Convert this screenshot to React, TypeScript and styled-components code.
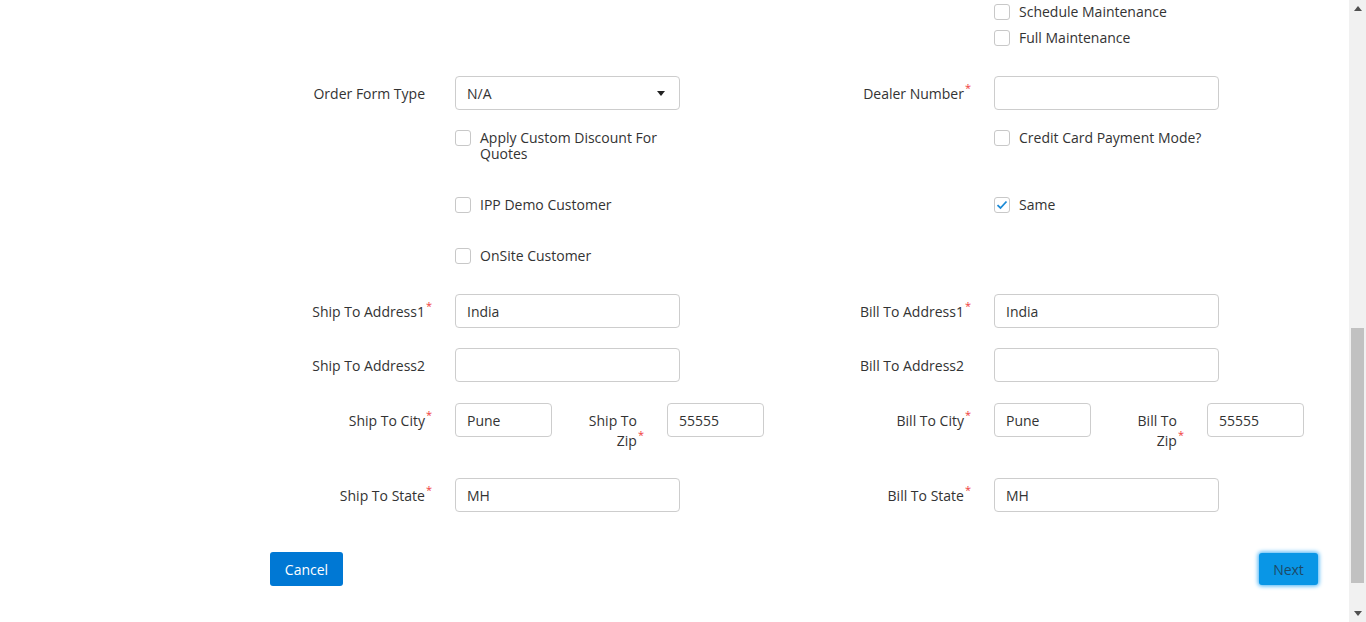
import React from "react";
import styled, { createGlobalStyle } from "styled-components";

const Global = createGlobalStyle`
  html, body { margin: 0; padding: 0; background: #fff; overflow: hidden; }
  body { font-family: "Open Sans", "Liberation Sans", sans-serif; font-size: 14px; color: #333; }
  * { box-sizing: border-box; }
`;

const Page = styled.div`
  display: flex;
  width: 1366px;
  height: 622px;
`;

const Main = styled.main`
  flex: 1;
  padding-left: 270px;
`;

const Row = styled.div<{ $mt: number }>`
  display: grid;
  grid-template-columns: 539px 539px;
  align-items: start;
  margin-top: ${(p) => p.$mt}px;
`;

const Half = styled.div`
  display: flex;
  align-items: flex-start;
`;

const Label = styled.label<{ $w?: number; $ml?: number }>`
  flex: none;
  width: ${(p) => p.$w ?? 155}px;
  margin-left: ${(p) => p.$ml ?? 0}px;
  margin-right: 30px;
  padding-top: 8px;
  line-height: 20px;
  text-align: right;
  color: #333;
`;

const Req = styled.span`
  color: #ef3b3b;
  font-size: 11px;
  position: relative;
  top: -7px;
  margin-right: -7px;
  margin-left: 1px;
`;

const Input = styled.input<{ $w?: number }>`
  width: ${(p) => p.$w ?? 225}px;
  height: 34px;
  border: 1px solid #cdcdcd;
  border-radius: 4px;
  padding: 0 11px;
  font-family: inherit;
  font-size: 14px;
  color: #333;
  outline: none;
  background: #fff;
`;

const SelectBox = styled.div`
  width: 225px;
  height: 34px;
  border: 1px solid #cdcdcd;
  border-radius: 4px;
  padding: 0 14px 0 11px;
  display: flex;
  align-items: center;
  justify-content: space-between;
  color: #333;
`;

const Checks = styled.div`
  display: flex;
  flex-direction: column;
  gap: 10px;
  margin-left: 185px;
  width: 225px;
`;

const CheckRow = styled.div`
  display: flex;
  align-items: flex-start;
  gap: 9px;
  line-height: 16px;
`;

const Box = styled.span`
  flex: none;
  width: 16px;
  height: 16px;
  border: 1px solid #c8c8c8;
  border-radius: 3px;
  background: #fff;
  display: flex;
  align-items: center;
  justify-content: center;
`;

const Footer = styled.div`
  width: 1048px;
  margin-top: 40px;
  display: flex;
  justify-content: space-between;
  align-items: center;
`;

const CancelBtn = styled.button`
  width: 73px;
  height: 34px;
  border: none;
  border-radius: 3px;
  background: #0078d4;
  color: #fff;
  font-family: inherit;
  font-size: 14px;
`;

const NextBtn = styled.button`
  width: 59px;
  height: 32px;
  border: none;
  border-radius: 3px;
  background: #0996e6;
  color: #1d4a66;
  font-family: inherit;
  font-size: 14px;
  box-shadow: 0 0 4px 1px #3fb0f5;
`;

const Scrollbar = styled.div`
  flex: none;
  width: 17px;
  background: #f1f1f1;
  display: flex;
  flex-direction: column;
`;

const Arrow = styled.div`
  height: 17px;
  display: flex;
  align-items: center;
  justify-content: center;
`;

const Track = styled.div`
  flex: 1;
  position: relative;
`;

const Thumb = styled.div`
  position: absolute;
  left: 2px;
  right: 2px;
  background: #c1c1c1;
`;

function Check({ label, checked }: { label: string; checked?: boolean }) {
  return (
    <CheckRow>
      <Box>
        {checked && (
          <svg width="12" height="10" viewBox="0 0 12 10">
            <path d="M1.5 5.2 L4.5 8 L10.5 1.5" fill="none" stroke="#1b8ad6" strokeWidth="1.8" />
          </svg>
        )}
      </Box>
      <span>{label}</span>
    </CheckRow>
  );
}

function L({ children, req, w, ml }: { children: React.ReactNode; req?: boolean; w?: number; ml?: number }) {
  return (
    <Label $w={w} $ml={ml}>
      {children}
      {req && <Req>*</Req>}
    </Label>
  );
}

export default function App() {
  const trackH = 588;
  const thumbTop = 311;
  const thumbH = 255;
  return (
    <>
      <Global />
      <Page>
        <Main>
          <Row $mt={4}>
            <div />
            <Checks>
              <Check label="Schedule Maintenance" />
              <Check label="Full Maintenance" />
            </Checks>
          </Row>
          <Row $mt={30}>
            <Half>
              <L>Order Form Type</L>
              <SelectBox>
                <span>N/A</span>
                <svg width="8" height="5" viewBox="0 0 8 5">
                  <path d="M0 0 H8 L4 5 Z" fill="#222" />
                </svg>
              </SelectBox>
            </Half>
            <Half>
              <L req>Dealer Number</L>
              <Input defaultValue="" />
            </Half>
          </Row>
          <Row $mt={20}>
            <Checks>
              <Check label="Apply Custom Discount For Quotes" />
            </Checks>
            <Checks>
              <Check label="Credit Card Payment Mode?" />
            </Checks>
          </Row>
          <Row $mt={35}>
            <Checks>
              <Check label="IPP Demo Customer" />
            </Checks>
            <Checks>
              <Check label="Same" checked />
            </Checks>
          </Row>
          <Row $mt={35}>
            <Checks>
              <Check label="OnSite Customer" />
            </Checks>
            <div />
          </Row>
          <Row $mt={30}>
            <Half>
              <L req>Ship To Address1</L>
              <Input defaultValue="India" />
            </Half>
            <Half>
              <L req>Bill To Address1</L>
              <Input defaultValue="India" />
            </Half>
          </Row>
          <Row $mt={20}>
            <Half>
              <L>Ship To Address2</L>
              <Input defaultValue="" />
            </Half>
            <Half>
              <L>Bill To Address2</L>
              <Input defaultValue="" />
            </Half>
          </Row>
          <Row $mt={21}>
            <Half>
              <L req>Ship To City</L>
              <Input $w={97} defaultValue="Pune" />
              <L req w={55} ml={30}>Ship To Zip</L>
              <Input $w={97} defaultValue="55555" />
            </Half>
            <Half>
              <L req>Bill To City</L>
              <Input $w={97} defaultValue="Pune" />
              <L req w={55} ml={31}>Bill To Zip</L>
              <Input $w={97} defaultValue="55555" />
            </Half>
          </Row>
          <Row $mt={26}>
            <Half>
              <L req>Ship To State</L>
              <Input defaultValue="MH" />
            </Half>
            <Half>
              <L req>Bill To State</L>
              <Input defaultValue="MH" />
            </Half>
          </Row>
          <Footer>
            <CancelBtn>Cancel</CancelBtn>
            <NextBtn>Next</NextBtn>
          </Footer>
        </Main>
        <Scrollbar>
          <Arrow>
            <svg width="8" height="5" viewBox="0 0 8 5">
              <path d="M0 5 L4 0 L8 5 Z" fill="#505050" />
            </svg>
          </Arrow>
          <Track>
            <Thumb style={{ top: `${(thumbTop / trackH) * 100}%`, height: `${(thumbH / trackH) * 100}%` }} />
          </Track>
          <Arrow>
            <svg width="8" height="5" viewBox="0 0 8 5">
              <path d="M0 0 H8 L4 5 Z" fill="#505050" />
            </svg>
          </Arrow>
        </Scrollbar>
      </Page>
    </>
  );
}
